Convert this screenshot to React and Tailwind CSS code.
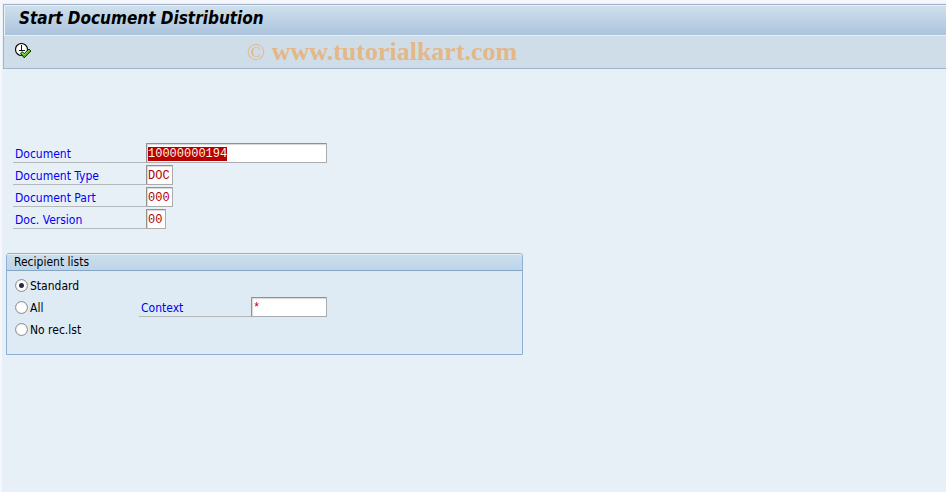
import { useEffect, useRef } from "react";

const documentFields = [
  { id: "document", label: "Document", value: "10000000194", width: "w-[181px]" },
  { id: "type", label: "Document Type", value: "DOC", width: "w-[27px]" },
  { id: "part", label: "Document Part", value: "000", width: "w-[27px]" },
  { id: "version", label: "Doc. Version", value: "00", width: "w-[20px]" },
];

const inputStyle =
  "h-5 rounded-[1px] border border-[#a9abac] border-t-[#8f9192] border-l-[#8f9192] bg-white px-px pt-px pb-0 font-['Liberation_Mono',monospace] text-[12px] leading-[17px] text-[#b40000] shadow-[inset_1px_1px_1px_#d8d8d8] outline-none selection:bg-[#b90000] selection:text-[#fff3e0]";

const labelStyle = "h-5 border-b border-[#b4b8ba] pl-[2px] pt-[3px] leading-4 text-[#0000f5]";

const radioStyle =
  "size-[13px] shrink-0 appearance-none rounded-full border border-[#8f9193] bg-white shadow-[inset_0_0_1px_#a4a4a4] checked:bg-[radial-gradient(circle,#2b2b45_0_2px,#ffffff_3px)]";

function ExecuteIcon() {
  return (
    <svg width="17" height="16" viewBox="0 0 17 16" aria-hidden="true">
      <circle cx="6.5" cy="6.5" r="6" fill="#fff" stroke="#111" strokeWidth="1.2" />
      <path d="M6.5 2v5M4 7.5h6" fill="none" stroke="#111" strokeWidth="1" />
      <path d="M5.5 10.3l1.7-1.7 2 2L14 6l2 2-6.8 6.9z" fill="#55b01f" stroke="#143806" strokeWidth="1" />
      <path d="M7 9.8l2.2 2.2L14 7.2" fill="none" stroke="#a4e26a" strokeWidth="1" />
    </svg>
  );
}

function Radio({ label, checked, className = "" }) {
  return (
    <label className={`flex h-5 items-center gap-[2px] ${className}`}>
      <input type="radio" name="recipients" defaultChecked={checked} className={radioStyle} />
      <span className="pt-px">{label}</span>
    </label>
  );
}

export default function App() {
  const first = useRef(null);

  useEffect(() => {
    first.current.focus();
    first.current.select();
  }, []);

  return (
    <div className="min-h-screen bg-[#f6f7fc] pt-[3px] pl-[2px] font-['DejaVu_Sans_Condensed','DejaVu_Sans',sans-serif] text-[12px] text-black">
      <div className="min-h-[calc(100vh-3px)] bg-[#e8f0f7] pt-px pl-px">
        <header className="border border-r-0 border-[#9fb4ca]">
          <div className="flex h-[30px] items-center border-t border-l border-[#e6f0f8] bg-linear-to-b from-[#cfe0ec] to-[#abc3dd] pb-[6px] pl-[14px]">
            <h1 className="text-[17px] leading-5 font-bold italic">Start Document Distribution</h1>
          </div>
          <div className="flex h-[33px] items-center gap-[215px] border-t border-[#e6f0f8] bg-[#cfdde8] pl-[11px]">
            <button type="button" aria-label="Execute" className="pb-[2px]">
              <ExecuteIcon />
            </button>
            <p className="font-['Liberation_Serif',serif] text-[26px] leading-8 font-bold text-[#e4b787]">
              <span className="text-[24px] font-normal">©</span> www.tutorialkart.com
            </p>
          </div>
        </header>

        <main className="pt-[74px] pl-[3px]">
          <div className="flex flex-col gap-[2px] pl-[7px]">
            {documentFields.map((field, i) => (
              <div key={field.id} className="flex">
                <label htmlFor={field.id} className={`w-[133px] ${labelStyle}`}>
                  {field.label}
                </label>
                <input
                  id={field.id}
                  ref={i === 0 ? first : null}
                  defaultValue={field.value}
                  className={`${field.width} ${inputStyle}`}
                />
              </div>
            ))}
          </div>

          <fieldset
            aria-labelledby="recipients-title"
            className="mt-6 w-full max-w-[517px] rounded-t-[3px] border border-[#8fb0d2] bg-[#deeaf4]"
          >
            <div
              id="recipients-title"
              className="h-[17px] rounded-t-[2px] border-t border-b border-t-[#e4f0f8] border-b-[#86a5c2] bg-linear-to-b from-[#cbdeed] to-[#bdd5e9] pl-[7px] leading-[15px]"
            >
              Recipient lists
            </div>
            <div className="flex flex-col gap-[2px] pt-1 pb-[15px] pl-2">
              <Radio label="Standard" checked />
              <div className="flex">
                <Radio label="All" className="w-[124px]" />
                <label htmlFor="context" className={`w-[112px] ${labelStyle}`}>
                  Context
                </label>
                <input id="context" defaultValue="*" className={`w-[76px] ${inputStyle}`} />
              </div>
              <Radio label="No rec.lst" />
            </div>
          </fieldset>
        </main>
      </div>
    </div>
  );
}
